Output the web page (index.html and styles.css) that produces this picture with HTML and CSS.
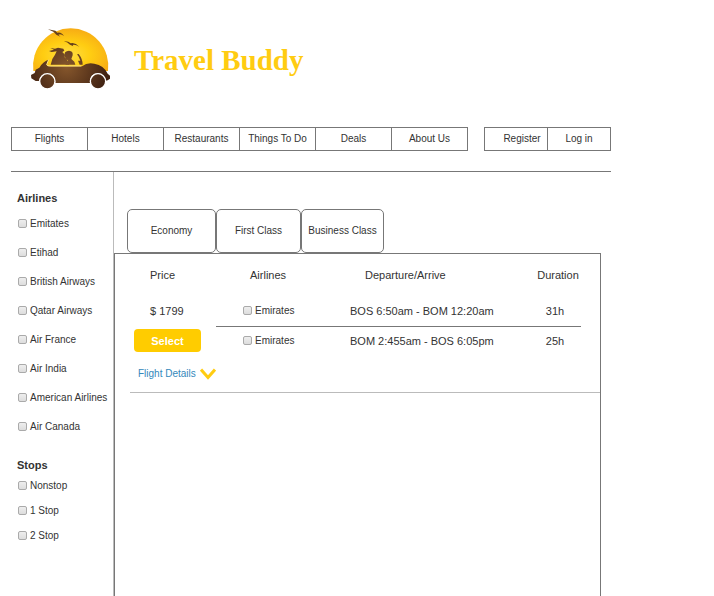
FILE: index.html
```html
<!DOCTYPE html>
<html lang="en">
<head>
<meta charset="utf-8">
<meta name="viewport" content="width=device-width, initial-scale=1">
<title>Travel Buddy</title>
<link rel="stylesheet" href="styles.css">
</head>
<body>
<div class="page">
  <header class="brand">
    <svg class="logo" viewBox="0 0 300 255" role="img" aria-label="Travel Buddy logo">
      <defs>
        <radialGradient id="sun" cx="45%" cy="62%" r="62%">
          <stop offset="0" stop-color="#ffdf45"/>
          <stop offset=".5" stop-color="#ffcd12"/>
          <stop offset="1" stop-color="#f7ac14"/>
        </radialGradient>
        <radialGradient id="body" gradientUnits="userSpaceOnUse" cx="140" cy="155" r="120">
          <stop offset="0" stop-color="#86572c"/>
          <stop offset="1" stop-color="#422313"/>
        </radialGradient>
      </defs>
      <path fill="url(#sun)" d="M40 168A113 113 0 1 1 264 168Z"/>
      <g fill="#65401b">
        <path d="M84 43L99 46Q107 46 112 53Q124 50 132 63Q123 56 115 59L121 65L109 59Q101 49 84 43Z"/>
        <path d="M132 79Q145 78 152 85Q165 81 178 95Q166 88 158 90L160 94L150 89Q143 82 132 79Z"/>
      </g>
      <g fill="url(#body)">
        <path d="M87 108L102 104L91 99L105 101L114 98L130 101L133 107L127 111L135 119L134 127L140 132L148 149H92L97 132L105 119L110 109L95 111Z"/>
        <path d="M134 119Q132 108 147 107Q160 108 158 121L154 132L163 140L166 149H136L144 136Q134 131 134 119Z"/>
        <path d="M171 118L176 117Q188 132 188 149H179L174 137H181Q179 127 171 118Z"/>
        <path d="M86 134L80 149Q80 154 91 154H186Q202 141 223 146Q252 151 263 176L270 182V191L263 196L256 198Q249 175 234 175Q208 176 211 204H106Q106 177 82 177Q60 178 57 198H47L34 190L33 180L44 174L47 164L58 158Q70 138 86 134Z"/>
      </g>
      <path fill="none" stroke="#ffe38a" stroke-width="3" d="M86 134L80 149Q81 153 91 153H184"/>
      <g fill="url(#body)" stroke="#fff" stroke-width="4">
        <circle cx="82" cy="199" r="23"/>
        <circle cx="234" cy="199" r="23"/>
      </g>
    </svg>
    <h1 class="title">Travel Buddy</h1>
  </header>

  <div class="bar">
    <nav class="menu" aria-label="Main">
      <a href="#flights">Flights</a>
      <a href="#hotels">Hotels</a>
      <a href="#restaurants">Restaurants</a>
      <a href="#things">Things To Do</a>
      <a href="#deals">Deals</a>
      <a href="#about">About Us</a>
    </nav>
    <nav class="menu account" aria-label="Account">
      <a class="register" href="#register">Register</a>
      <a href="#login">Log in</a>
    </nav>
  </div>

  <div class="content">
    <aside class="filters">
      <h2>Airlines</h2>
      <div class="options">
        <label><input type="checkbox">Emitates</label>
        <label><input type="checkbox">Etihad</label>
        <label><input type="checkbox">British Airways</label>
        <label><input type="checkbox">Qatar Airways</label>
        <label><input type="checkbox">Air France</label>
        <label><input type="checkbox">Air India</label>
        <label><input type="checkbox">American Airlines</label>
        <label><input type="checkbox">Air Canada</label>
      </div>
      <h2>Stops</h2>
      <div class="options stops">
        <label><input type="checkbox">Nonstop</label>
        <label><input type="checkbox">1 Stop</label>
        <label><input type="checkbox">2 Stop</label>
      </div>
    </aside>

    <main class="results">
      <div class="tabs">
        <button type="button" class="tab economy">Economy</button>
        <button type="button" class="tab first">First Class</button>
        <button type="button" class="tab">Business Class</button>
      </div>
      <section class="panel">
        <div class="offer">
          <table class="flights">
            <thead>
              <tr>
                <th class="price" scope="col">Price</th>
                <th class="airline" scope="col">Airlines</th>
                <th class="times" scope="col">Departure/Arrive</th>
                <th class="duration" scope="col">Duration</th>
              </tr>
            </thead>
            <tbody>
              <tr class="outbound">
                <td class="price">$ 1799</td>
                <td class="airline"><label><input type="checkbox">Emirates</label></td>
                <td>BOS 6:50am - BOM 12:20am</td>
                <td class="duration">31h</td>
              </tr>
              <tr class="inbound">
                <td class="action"><button type="button" class="select">Select</button></td>
                <td class="airline"><label><input type="checkbox">Emirates</label></td>
                <td>BOM 2:455am - BOS 6:05pm</td>
                <td class="duration">25h</td>
              </tr>
            </tbody>
          </table>
          <a class="details" href="#details">Flight Details
            <svg class="chevron" viewBox="0 0 16 12" aria-hidden="true"><path d="M1 1.500L8 9.500L15 1.500"/></svg>
          </a>
        </div>
      </section>
    </main>
  </div>
</div>
</body>
</html>
```
FILE: styles.css
```css
* {
  box-sizing: border-box;
}

body {
  margin: 0;
  background: #fff;
  color: #333;
  font: 10px/16px "Liberation Sans", Arial, sans-serif;
}

.page {
  display: flex;
  flex-direction: column;
  max-width: 611px;
  min-height: 100vh;
  padding-left: 11px;
}

a {
  color: inherit;
  text-decoration: none;
}

button {
  font: inherit;
  color: inherit;
  padding: 0;
  cursor: pointer;
}

.brand {
  display: flex;
  align-items: center;
  gap: 14px;
  padding: 15px 0 0 9px;
}

.logo {
  width: 100px;
  height: 85px;
}

.title {
  margin: 0;
  padding-top: 4px;
  color: #fc1;
  font: bold 29px/32px "Liberation Serif", "Times New Roman", serif;
}

.bar {
  display: flex;
  justify-content: space-between;
  margin-top: 27px;
  padding-bottom: 20px;
  border-bottom: 1px solid #777;
}

.menu {
  display: flex;
  border: 1px solid #777;
  border-right: 0;
}

.menu a {
  width: 76px;
  border-right: 1px solid #777;
  line-height: 22px;
  text-align: center;
}

.account a {
  width: 63px;
}

.account .register {
  padding-left: 12px;
}

.content {
  display: flex;
  flex: 1;
}

.filters {
  flex: none;
  width: 103px;
  padding: 18px 0 0 6px;
  border-right: 1px solid #bbb;
}

.filters h2 {
  margin: 0;
  font-size: 11px;
  line-height: 16px;
}

.options {
  display: flex;
  flex-direction: column;
  padding: 3px 0 16px;
}

.options label {
  line-height: 29px;
}

.stops {
  padding-top: 0;
}

.stops label {
  line-height: 25px;
}

label {
  display: flex;
  align-items: center;
  gap: 3px;
  white-space: nowrap;
}

input[type="checkbox"] {
  appearance: none;
  flex: none;
  width: 9px;
  height: 9px;
  margin: 0 0 0 1px;
  border: 1px solid #aaa;
  border-radius: 2px;
  background: linear-gradient(#eee, #ddd);
}

input[type="checkbox"]:checked {
  background: #fc0;
}

.results {
  display: flex;
  flex: 1;
  flex-direction: column;
  padding: 37px 10px 0 0;
}

.tabs {
  display: flex;
  padding-left: 13px;
}

.tab {
  width: 83px;
  height: 44px;
  border: 1px solid #777;
  border-radius: 5px;
  background: #fff;
}

.economy {
  width: 89px;
}

.first {
  width: 85px;
}

.panel {
  flex: 1;
  padding-left: 15px;
  border: 1px solid #777;
  border-bottom: 0;
}

.offer {
  border-bottom: 1px solid #bbb;
}

.flights {
  width: 451px;
  border-spacing: 0;
  table-layout: fixed;
  font-size: 11px;
}

th,
td {
  padding: 0;
  font-weight: normal;
  text-align: left;
}

thead tr {
  height: 41px;
}

.outbound {
  height: 32px;
}

.inbound {
  height: 27px;
}

.outbound td + td {
  border-bottom: 1px solid #777;
}

.flights label {
  font-size: 10px;
}

.price {
  width: 86px;
  padding-left: 20px;
}

.airline {
  width: 134px;
  padding-left: 26px;
}

th.airline {
  padding-left: 34px;
}

th.times {
  padding-left: 15px;
}

.flights .duration {
  width: 46px;
  text-align: center;
}

td.duration {
  padding-right: 6px;
}

.action {
  padding-left: 4px;
}

.select {
  display: block;
  width: 67px;
  height: 23px;
  border: 0;
  border-radius: 4px;
  background: #fc0;
  color: #fff;
  font-weight: bold;
}

.details {
  display: flex;
  align-items: center;
  gap: 4px;
  width: max-content;
  height: 38px;
  padding: 2px 0 0 8px;
  color: #38b;
}

.chevron {
  width: 16px;
  height: 12px;
  fill: none;
  stroke: #fc1;
  stroke-width: 3;
}
```
